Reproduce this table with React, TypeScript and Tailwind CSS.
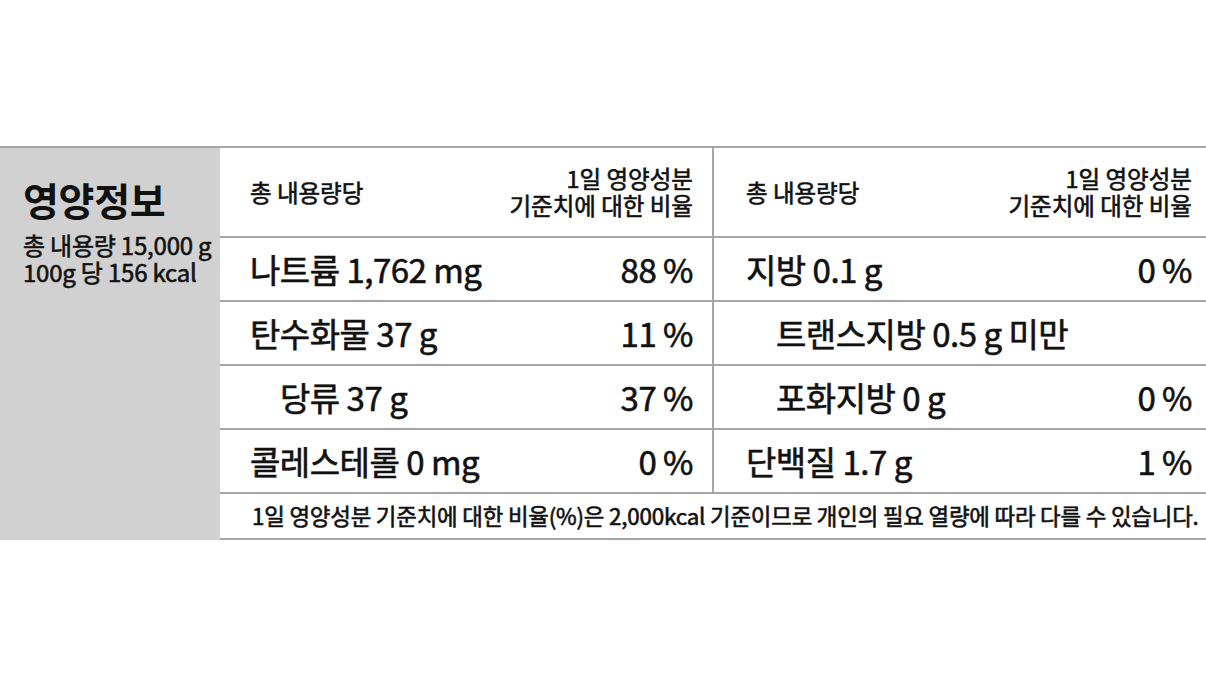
import React from "react";

type Row = { name: string; pct?: string; indent?: boolean };

const leftRows: Row[] = [
  { name: "나트륨 1,762 mg", pct: "88 %" },
  { name: "탄수화물 37 g", pct: "11 %" },
  { name: "당류 37 g", pct: "37 %", indent: true },
  { name: "콜레스테롤 0 mg", pct: "0 %" },
];

const rightRows: Row[] = [
  { name: "지방 0.1 g", pct: "0 %" },
  { name: "트랜스지방 0.5 g 미만", indent: true },
  { name: "포화지방 0 g", pct: "0 %", indent: true },
  { name: "단백질 1.7 g", pct: "1 %" },
];

const medium = "[-webkit-text-stroke:0.6px_#111]";

function Column({ rows, divider }: { rows: Row[]; divider?: boolean }) {
  const side = divider ? "border-r-2 border-[#a6a6a6] pl-[30px] pr-[19px]" : "pl-[32px] pr-[14px]";
  return (
    <div className="flex flex-col">
      <div className={`flex h-[90px] items-center justify-between border-b-2 border-[#a6a6a6] ${side}`}>
        <span className={`text-[23.5px] leading-[28px] ${medium}`}>총 내용량당</span>
        <div className={`text-right text-[23.5px] leading-[27px] ${medium}`}>
          <div>1일 영양성분</div>
          <div>기준치에 대한 비율</div>
        </div>
      </div>
      {rows.map((r) => (
        <div
          key={r.name}
          className={`flex h-[64px] items-center justify-between border-b-2 border-[#a6a6a6] ${side}`}
        >
          <span className={`text-[33px] leading-[40px] tracking-[-0.5px] ${medium} ${r.indent ? "pl-[30px]" : ""}`}>
            {r.name}
          </span>
          {r.pct ? <span className={`text-[33px] leading-[40px] tracking-[-0.5px] ${medium}`}>{r.pct}</span> : null}
        </div>
      ))}
    </div>
  );
}

export default function App() {
  return (
    <div
      className="h-[678px] w-[1206px] overflow-hidden bg-white pt-[146px] text-[#111]"
      style={{ fontFamily: '"Noto Sans CJK KR", "Noto Sans", sans-serif' }}
    >
      <div className="flex border-t-2 border-[#a6a6a6]">
        <div className="w-[220px] shrink-0 bg-[#d1d1d1] pl-[23px] pt-[26px]">
          <div className="text-[39px] font-bold leading-[50px] tracking-[-0.3px]">영양정보</div>
          <div className={`mt-[7px] whitespace-nowrap text-[24px] leading-[27px] tracking-[-0.2px] ${medium}`}>
            <div>총 내용량 15,000 g</div>
            <div>100g 당 156 kcal</div>
          </div>
        </div>
        <div className="flex-1">
          <div className="grid grid-cols-[494px_1fr]">
            <Column rows={leftRows} divider />
            <Column rows={rightRows} />
          </div>
          <div className="flex h-[46px] items-center border-b-2 border-[#a6a6a6] pl-[32px]">
            <span className={`whitespace-nowrap text-[22.4px] tracking-[-0.2px] ${medium}`}>
              1일 영양성분 기준치에 대한 비율(%)은 2,000kcal 기준이므로 개인의 필요 열량에 따라 다를 수 있습니다.
            </span>
          </div>
        </div>
      </div>
    </div>
  );
}
